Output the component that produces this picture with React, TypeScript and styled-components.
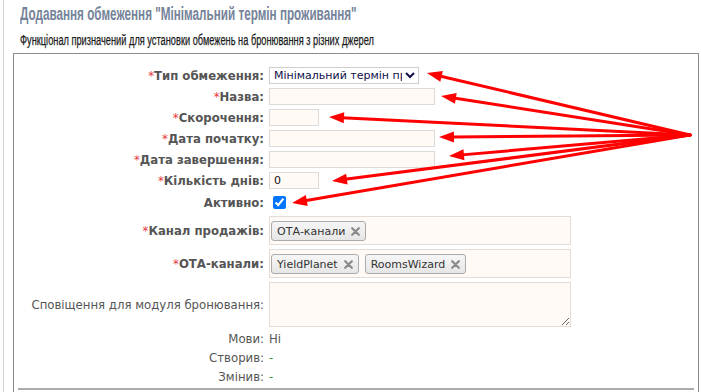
import React from "react";
import styled, { createGlobalStyle } from "styled-components";

const CONDENSED = `"DejaVu Sans Condensed", "DejaVu Sans", sans-serif`;
const ARIAL = `"Liberation Sans", Arial, sans-serif`;
const VERDANA = `"DejaVu Sans", Verdana, sans-serif`;

const GlobalStyle = createGlobalStyle`
  html, body { margin: 0; padding: 0; background: #fff; }
  body { overflow: hidden; width: 702px; height: 392px; }
  * { box-sizing: border-box; }
`;

const Page = styled.div`
  position: relative;
  width: 702px;
  height: 392px;
  overflow: hidden;
  padding-left: 3px;
`;

const Frame = styled.div`
  height: 100%;
  border-left: 1px solid #d4d4d4;
  padding: 4px 0 0 9px;
`;

/* Arial Narrow look: Arial metrics squeezed horizontally */
const Narrow = styled.span<{ $k: number }>`
  display: inline-block;
  white-space: nowrap;
  transform: scaleX(${(p) => p.$k});
  transform-origin: left center;
`;

const Title = styled.h1`
  margin: 0 0 0 7px;
  font: 700 18px/20px ${ARIAL};
  color: #75839a;
  white-space: nowrap;
`;

const Subtitle = styled.div`
  margin: 9px 0 0 7px;
  font: 400 14px/14px ${ARIAL};
  color: #1a1a1a;
  white-space: nowrap;
  -webkit-text-stroke: 0.25px #1a1a1a;
`;

const Box = styled.div`
  margin-top: 6px;
  width: 686px;
  height: 400px;
  border: 1px solid #8c8c8c;
  padding: 13px 4px 0 0;
`;

const Form = styled.div`
  display: grid;
  grid-template-columns: 250px 1fr;
  column-gap: 5px;
  row-gap: 4px;
  align-items: center;
`;

const Label = styled.div<{ $light?: boolean }>`
  display: flex;
  justify-content: flex-end;
  font: ${(p) => (p.$light ? "400 13px/15px" : "700 13px/16px")} ${CONDENSED};
  color: #555;
  white-space: nowrap;
`;

const Req = styled.span`
  color: #e8383d;
  font-weight: 400;
`;

const Field = styled.div`
  display: flex;
  align-items: center;
  min-height: 17px;
`;

const TextInput = styled.input<{ $w: number }>`
  width: ${(p) => p.$w}px;
  height: 17px;
  margin: 0;
  padding: 0 4px;
  border: 1px solid #dedad6;
  background: #fffaf5;
  font: 400 11px ${VERDANA};
  color: #111;
  outline: none;
`;

const Select = styled.select`
  width: 150px;
  height: 17px;
  margin: 0;
  padding: 0;
  border: 1px solid #cfcfcf;
  border-radius: 0;
  background: #fff;
  font: 400 11px ${VERDANA};
  color: #10104a;
`;

const Check = styled.input`
  width: 13px;
  height: 13px;
  margin: 3px 0 3px 4px;
`;

const Choices = styled.div`
  display: flex;
  flex-wrap: wrap;
  gap: 6px;
  width: 302px;
  height: 29px;
  padding: 4px 1px 0;
  border: 1px solid #e2ddd8;
  background: #fffaf5;
`;

const Tag = styled.span`
  display: inline-flex;
  align-items: center;
  gap: 6px;
  height: 20px;
  padding: 0 5px;
  border: 1px solid #ababab;
  border-radius: 3px;
  background: linear-gradient(#f6f6f6, #e6e6e6);
  font: 400 11px ${VERDANA};
  color: #333;
`;

const Note = styled.textarea`
  display: block;
  width: 302px;
  height: 45px;
  margin: 0;
  border: 1px solid #e2ddd8;
  background: #fffaf5;
  resize: both;
  outline: none;
`;

const Value = styled.div<{ $green?: boolean }>`
  font: 400 13px/15px ${CONDENSED};
  color: ${(p) => (p.$green ? "#3a9a3a" : "#555")};
`;

const Divider = styled.hr`
  margin: 4px 0 0 4px;
  border: none;
  border-top: 2px solid #ababab;
`;

const Overlay = styled.svg`
  position: absolute;
  left: 0;
  top: 0;
  pointer-events: none;
`;

const XIcon = () => (
  <svg width="9" height="9" viewBox="0 0 9 9">
    <path d="M1.2 1.2 L7.8 7.8 M7.8 1.2 L1.2 7.8" stroke="#8a8a8a" strokeWidth="2.2" strokeLinecap="round" />
  </svg>
);

const origin = { x: 690, y: 135 };
const tips = [
  { x: 427, y: 73 },
  { x: 441, y: 96 },
  { x: 329, y: 117 },
  { x: 439, y: 137 },
  { x: 449, y: 156 },
  { x: 332, y: 181 },
  { x: 292, y: 203 },
];

function Arrow({ tx, ty }: { tx: number; ty: number }) {
  const dx = tx - origin.x;
  const dy = ty - origin.y;
  const len = Math.hypot(dx, dy);
  const ux = dx / len;
  const uy = dy / len;
  const L = 15;
  const W = 5.5;
  const bx = tx - ux * L;
  const by = ty - uy * L;
  const nx = -uy;
  const ny = ux;
  const pts = `${tx},${ty} ${bx + nx * W},${by + ny * W} ${bx - nx * W},${by - ny * W}`;
  return (
    <g>
      <line x1={origin.x} y1={origin.y} x2={bx + ux * 2} y2={by + uy * 2} stroke="#ff0000" strokeWidth="3" strokeLinecap="round" />
      <polygon points={pts} fill="#ff0000" />
    </g>
  );
}

export default function App() {
  return (
    <>
      <GlobalStyle />
      <Page>
        <Frame>
          <Title>
            <Narrow $k={0.65}>Додавання обмеження "Мінімальний термін проживання"</Narrow>
          </Title>
          <Subtitle>
            <Narrow $k={0.66}>Функціонал призначений для установки обмежень на бронювання з різних джерел</Narrow>
          </Subtitle>
          <Box>
            <Form>
              <Label><Req>*</Req>Тип обмеження:</Label>
              <Field>
                <Select defaultValue="min">
                  <option value="min">Мінімальний термін проживання</option>
                </Select>
              </Field>

              <Label><Req>*</Req>Назва:</Label>
              <Field><TextInput $w={166} defaultValue="" /></Field>

              <Label><Req>*</Req>Скорочення:</Label>
              <Field><TextInput $w={50} defaultValue="" /></Field>

              <Label><Req>*</Req>Дата початку:</Label>
              <Field><TextInput $w={166} defaultValue="" /></Field>

              <Label><Req>*</Req>Дата завершення:</Label>
              <Field><TextInput $w={166} defaultValue="" /></Field>

              <Label><Req>*</Req>Кількість днів:</Label>
              <Field><TextInput $w={50} defaultValue="0" /></Field>

              <Label>Активно:</Label>
              <Field><Check type="checkbox" defaultChecked /></Field>

              <Label><Req>*</Req>Канал продажів:</Label>
              <Field>
                <Choices>
                  <Tag>ОТА-канали <XIcon /></Tag>
                </Choices>
              </Field>

              <Label><Req>*</Req>ОТА-канали:</Label>
              <Field>
                <Choices>
                  <Tag>YieldPlanet <XIcon /></Tag>
                  <Tag>RoomsWizard <XIcon /></Tag>
                </Choices>
              </Field>

              <Label $light>Сповіщення для модуля бронювання:</Label>
              <Field><Note readOnly /></Field>

              <Label $light>Мови:</Label>
              <Value>Ні</Value>

              <Label $light>Створив:</Label>
              <Value $green>-</Value>

              <Label $light>Змінив:</Label>
              <Value $green>-</Value>
            </Form>
            <Divider />
          </Box>
        </Frame>
        <Overlay width="702" height="392" viewBox="0 0 702 392">
          {tips.map((t, i) => (
            <Arrow key={i} tx={t.x} ty={t.y} />
          ))}
        </Overlay>
      </Page>
    </>
  );
}
